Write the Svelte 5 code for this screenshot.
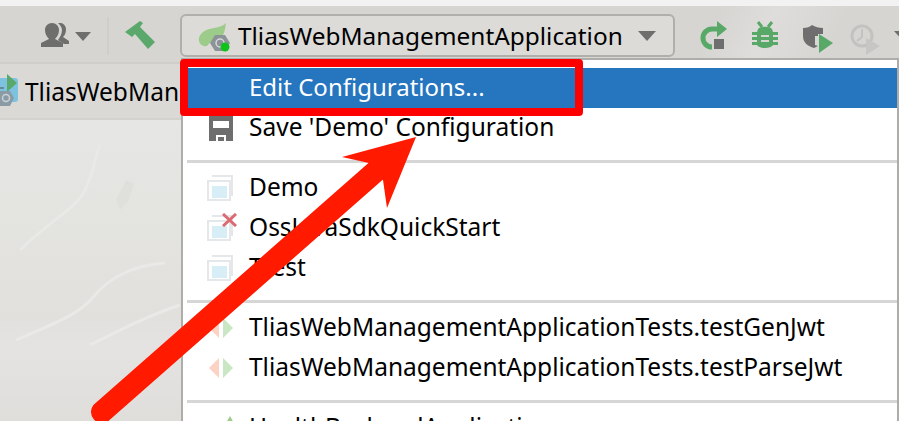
<script lang="ts">
  const runConfigs = ["Demo", "OssJavaSdkQuickStart", "Ttest"];
  const tests = ["TliasWebManagementApplicationTests.testGenJwt", "TliasWebManagementApplicationTests.testParseJwt"];
</script>

<div class="ide">
  <div class="topstrip"></div>

  <div class="toolbar">
    <svg class="user" width="30" height="26" viewBox="0 0 30 26">
      <path fill="#6e6e6c" d="M0 24v-4l8-4c-3-3-4-6-4-9 0-4 3-7 7-7s7 3 7 7c0 3-1 6-4 9l8 4v4z" />
      <path fill="#6e6e6c" d="M17 0c4-1 8 2 8 6 0 4-1 6-3 8l6 4v3h-5l-6-4c2-3 4-6 4-10 0-3-2-5-4-7z" />
    </svg>
    <span class="caret small"></span>
    <span class="sep"></span>
    <svg class="hammer" width="30" height="28" viewBox="0 0 30 28">
      <path fill="#5aa86c" d="M0 11 15 0l3 2-3 4 15 15-7 7-13-15-3 3z" />
    </svg>
    <div class="combo">
      <svg width="36" height="32" viewBox="0 0 36 32">
        <path fill="#9ccb8a" d="M28 3c-1 5-1 11-5 14-4 3-10 3-14 9C4 27 0 23 1 18c2-7 9-9 15-10 5-1 9-2 12-5z" />
        <path fill="#8b9399" d="M17 15h10l5 8-5 8H17l-5-8z" />
        <circle cx="22" cy="23" r="4" fill="none" stroke="#d8d8d6" stroke-width="1.5" />
        <circle cx="27" cy="27" r="4.5" fill="#12c21c" />
      </svg>
      <span class="combo-label">TliasWebManagementApplication</span>
      <span class="caret"></span>
    </div>
    <svg class="rerun" width="28" height="30" viewBox="0 0 28 30">
      <path fill="none" stroke="#58a868" stroke-width="5" d="M12 26c-5 0-9-4-9-9 0-5 4-9 9-9h6" />
      <path fill="#58a868" d="M17 0l10 8-10 8z" />
      <rect x="14" y="18" width="10" height="10" fill="#6e6e6e" />
    </svg>
    <svg class="bug" width="26" height="30" viewBox="0 0 26 30">
      <path stroke="#58a868" stroke-width="3" d="M6 1l4 5M20 1l-4 5" />
      <path fill="#58a868" d="M6 8c2-3 12-3 14 0l1 3h5v3h-5v2h5v3h-5v2h5v3h-5c-2 4-14 4-16 0H0v-3h5v-2H0v-3h5v-2H0v-3h5z" />
      <path stroke="#d6d5d2" stroke-width="2" d="M9 15h8M9 20h8" />
    </svg>
    <svg class="cover" width="32" height="28" viewBox="0 0 32 28">
      <path fill="#6e6e6e" d="M1 3c4 0 7-1 9-3 3 2 7 3 11 3v6h-5v2h-3v9l3 1-4 2C6 21 1 18 1 11z" />
      <path fill="#58a868" d="M17 9l14 9-14 10z" />
    </svg>
    <svg class="profile" width="30" height="32" viewBox="0 0 30 32">
      <circle cx="12" cy="13" r="10" fill="none" stroke="#c2c2c0" stroke-width="3" />
      <path fill="none" stroke="#c2c2c0" stroke-width="2" d="M12 6v8l-5 4" />
      <path fill="#c6c6c4" d="M16 15l14 8-14 9z" />
    </svg>
    <span class="caret tail"></span>
  </div>

  <div class="navbar">
    <svg width="24" height="34" viewBox="0 0 24 34">
      <rect x="-8" y="4" width="26" height="24" rx="3" fill="#7dc2de" />
      <path fill="#5aa86c" d="M7 0l10 9-10 9z" />
      <path stroke="#555" stroke-width="1" d="M-2 14h6" />
      <path fill="#8b9ba6" d="M0 17h10l4 7-4 8H0l-4-8z" />
      <circle cx="6" cy="24" r="3.5" fill="none" stroke="#c9d2d6" stroke-width="1.5" />
    </svg>
    <span class="nav-label">TliasWebMan</span>
  </div>

  <div class="canvas">
    <svg width="182" height="301" viewBox="0 0 182 301">
      <g fill="none" stroke="#e9e9e7" stroke-width="3">
        <path d="M16 220C50 205 80 195 95 175c15-18 40-30 70-32" />
        <path d="M90 225c30-15 60-30 90-40" />
        <path d="M20 130C50 100 75 90 85 70c10-20 10-35 15-45" />
      </g>
      <path fill="#dfdfdc" d="M116 80l10-20 8 4-6 18-8 8z" />
    </svg>
  </div>

  <div class="menu">
    <div class="item selected"><span class="label">Edit Configurations...</span></div>
    <div class="item">
      <svg class="icon" width="26" height="26" viewBox="0 0 26 26">
        <path fill="#6e6e6e" d="M2 0h24v26H2z" />
        <rect x="6" y="6" width="16" height="7" fill="#fff" />
        <rect x="9" y="20" width="10" height="6" fill="#fff" />
        <rect x="11" y="22" width="6" height="4" fill="#6e6e6e" />
      </svg>
      <span class="label">Save 'Demo' Configuration</span>
    </div>
    <div class="divider"></div>
    {#each runConfigs as name, i}
      <div class="item">
        <svg class="icon" width="26" height="26" viewBox="0 0 26 26">
          <path fill="none" stroke="#e4e8ea" stroke-width="2" d="M5 1h20v20" />
          <rect x="1" y="6" width="22" height="19" fill="#fff" stroke="#e4e8ea" stroke-width="2" />
          <rect x="5" y="11" width="15" height="12" fill="#d8eef6" />
        </svg>
        {#if i === 1}
          <svg class="fail" width="15" height="14" viewBox="0 0 15 14">
            <path stroke="#dc6a72" stroke-width="3" d="M1 1l13 12M14 1L1 13" />
          </svg>
        {/if}
        <span class="label">{name}</span>
      </div>
    {/each}
    <div class="divider"></div>
    {#each tests as name}
      <div class="item">
        <svg class="icon" width="26" height="24" viewBox="0 0 26 24">
          <path fill="#fbd2c4" d="M12 2v20L2 12z" />
          <path fill="#cbe6c2" d="M16 2v20l10-10z" />
        </svg>
        <span class="label">{name}</span>
      </div>
    {/each}
    <div class="divider"></div>
    <div class="item">
      <svg class="icon" width="26" height="24" viewBox="0 0 26 24">
        <path fill="#9ccb8a" d="M23 0l8 14H15z" />
      </svg>
      <span class="label">HealthBackendApplication</span>
    </div>
  </div>

  <div class="highlight"></div>

  <svg class="arrow" width="899" height="421" viewBox="0 0 899 421">
    <path fill="none" stroke="#ff1a00" stroke-width="22" stroke-linecap="round" d="M376 171 102 412" />
    <path fill="#ff1a00" d="M416 137 342 157 369 163 383 180 387 208z" />
  </svg>
</div>

<style>
  :global(body) {
    margin: 0;
  }

  .ide {
    position: relative;
    width: 899px;
    height: 421px;
    overflow: hidden;
    font-family: "Noto Sans", "Open Sans", sans-serif;
    color: #000;
    background: #e3e3e0;
  }

  .topstrip {
    height: 6px;
    background: #f2f2f2;
  }

  .toolbar {
    display: flex;
    align-items: center;
    height: 58px;
    box-sizing: border-box;
    padding-left: 41px;
    background:
      linear-gradient(115deg, transparent 78%, #dedddb 84%, transparent 92%),
      #d6d5d2;
    border-bottom: 2px solid #cfcecb;
  }

  .toolbar > * {
    flex: none;
  }

  .user {
    margin: 4px 4px 0 0;
  }

  .caret {
    display: block;
    flex: none;
    width: 0;
    height: 0;
    border-left: 9px solid transparent;
    border-right: 9px solid transparent;
    border-top: 10px solid #6e6e6c;
  }

  .caret.small {
    margin-top: 4px;
    border-left-width: 8px;
    border-right-width: 8px;
    border-top-width: 9px;
  }

  .sep {
    width: 2px;
    height: 38px;
    margin: 4px 0 0 16px;
    background: #cfcecb;
  }

  .hammer {
    margin: 2px 0 0 16px;
  }

  .combo {
    display: flex;
    align-items: center;
    box-sizing: border-box;
    width: 495px;
    height: 43px;
    margin: 3px 0 0 25px;
    padding-left: 16px;
    border: 2px solid #b0afac;
    border-radius: 6px;
    background: #dcdbd8;
  }

  .combo-label {
    margin: 0 0 0 4px;
    font-size: 24.4px;
    white-space: nowrap;
  }

  .combo .caret {
    margin-left: 15px;
  }

  .rerun {
    margin: 4px 0 0 25px;
  }

  .bug {
    margin: 4px 0 0 24px;
  }

  .cover {
    margin: 9px 0 0 24px;
  }

  .profile {
    margin: 9px 0 0 16px;
  }

  .caret.tail {
    margin: 4px 0 0 14px;
  }

  .navbar {
    display: flex;
    align-items: center;
    height: 56px;
    box-sizing: border-box;
    border-bottom: 2px solid #d3d2cf;
    background: #dad9d6;
  }

  .nav-label {
    margin-left: 1px;
    font-size: 24.5px;
  }

  .canvas {
    height: 301px;
    background: linear-gradient(180deg, #e6e7e4, #e1e0dd 65%, #e4e3e2 75%, #dfdedb);
  }

  .canvas svg {
    display: block;
  }

  .menu {
    position: absolute;
    left: 181px;
    top: 58px;
    width: 718px;
    box-sizing: border-box;
    padding-top: 8px;
    background: #fff;
    border-top: 2px solid #aeadaa;
    border-left: 2px solid #aeadaa;
    border-right: 2px solid #aeadaa;
  }

  .item {
    position: relative;
    display: flex;
    align-items: center;
    height: 40px;
    padding-left: 24px;
    font-size: 24.5px;
    white-space: nowrap;
  }

  .item.selected {
    margin-left: 4px;
    padding-left: 62px;
    font-size: 24px;
    background: #2675bf;
    color: #fff;
  }

  .icon {
    flex: none;
    overflow: visible;
  }

  .label {
    margin-left: 16px;
    margin-bottom: 4px;
  }

  .selected .label {
    margin-left: 0;
  }

  .fail {
    position: absolute;
    left: 39px;
    top: 5px;
  }

  .divider {
    height: 3px;
    margin: 12px 0 5px 4px;
    background: #d6d6d6;
  }

  .highlight {
    position: absolute;
    left: 180px;
    top: 59px;
    width: 403px;
    height: 57px;
    box-sizing: border-box;
    border: 8px solid #ff0000;
    border-radius: 4px;
  }

  .arrow {
    position: absolute;
    left: 0;
    top: 0;
  }
</style>
